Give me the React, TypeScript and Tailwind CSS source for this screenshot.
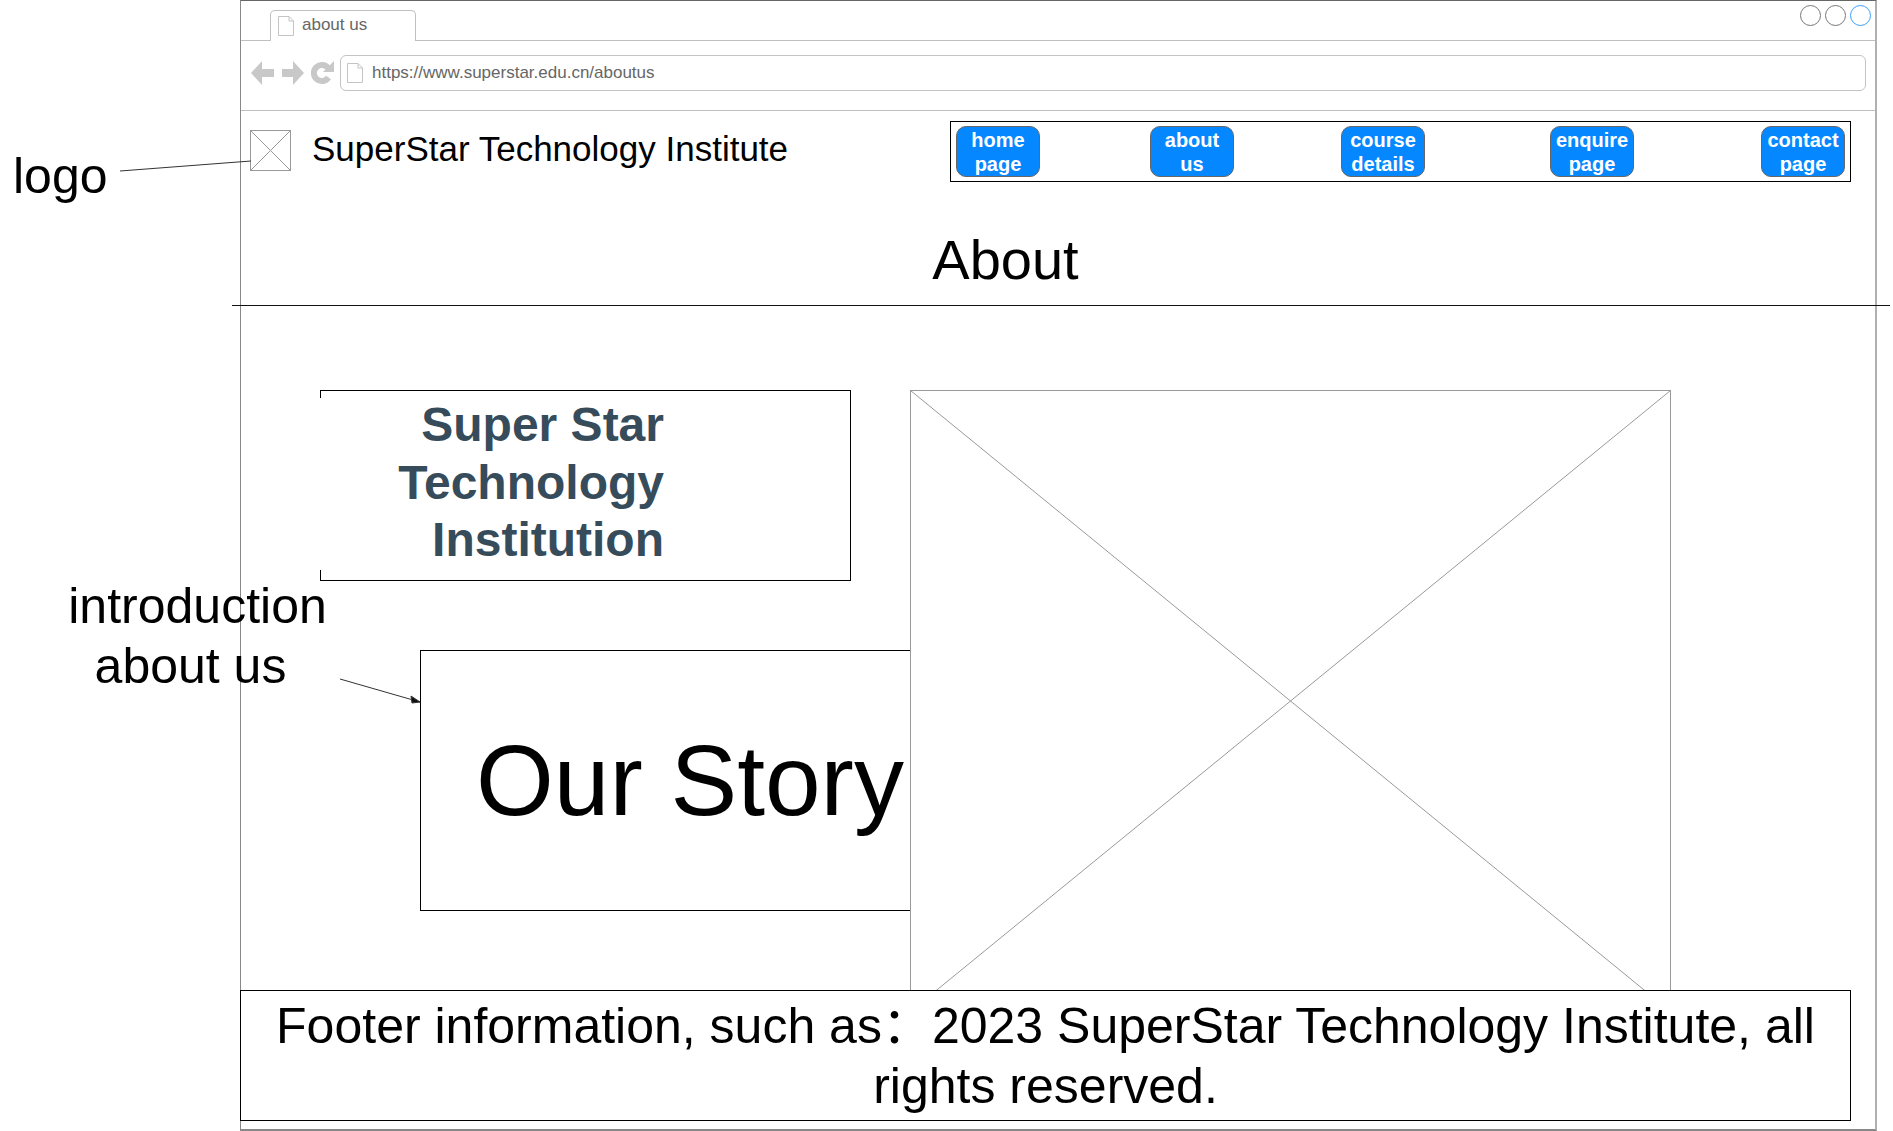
const FONT = "font-['Liberation_Sans',Arial,sans-serif]";

function DocIcon({ className }: { className: string }) {
  return (
    <svg className={className} viewBox="0 0 16 20" fill="none" stroke="#c4c4c4" strokeWidth="1">
      <path d="M0.5 0.5H11L15.5 5V19.5H0.5Z" />
      <path d="M11 0.5V5H15.5" />
    </svg>
  );
}

function NavButton({ top, bottom, className }: { top: string; bottom: string; className: string }) {
  return (
    <div className={`h-[51px] w-[84px] shrink-0 rounded-[10px] border border-[#666] bg-[#0588ff] pt-px text-center text-[20px] font-bold leading-[24px] text-white ${className}`}>
      <div>{top}</div>
      <div>{bottom}</div>
    </div>
  );
}

export default function App() {
  return (
    <div className={`relative h-[1131px] w-[1893px] overflow-hidden bg-white text-black ${FONT}`}>
      <div className="ml-[240px] flex h-[1131px] w-[1637px] flex-col border-x border-t border-b-2 border-x-[#888] border-t-[#666] border-b-[#888] border-r-2 border-r-[#b0b0b0]">
        {/* tab strip */}
        <div className="relative flex h-[40px] shrink-0 items-end border-b border-[#c0c0c0] pl-[29px]">
          <div className="-mb-px flex h-[31px] w-[146px] items-center gap-[9px] rounded-t-[5px] border border-b-0 border-[#c0c0c0] bg-white pl-[7px] text-[17px] leading-none text-[#666]">
            <DocIcon className="h-[20px] w-[16px]" />
            <span className="-ml-px mb-[3px]">about us</span>
          </div>
          <div className="ml-auto mr-[4px] flex gap-[4px] self-start pt-[4px]">
            <div className="h-[21px] w-[21px] rounded-full border border-[#777]" />
            <div className="h-[21px] w-[21px] rounded-full border border-[#777]" />
            <div className="h-[21px] w-[21px] rounded-full border border-[#3b9eff]" />
          </div>
        </div>
        {/* address bar */}
        <div className="flex h-[70px] shrink-0 items-center border-b border-[#c0c0c0] pb-[5px] pl-[10px] pr-[9px]">
          <svg className="h-[26px] w-[89px] shrink-0" viewBox="0 0 89 26" fill="#c8c8c8">
            <path d="M0 13L11 1V9H23V17H11V25Z" />
            <path d="M53 13L42 1V9H31V17H42V25Z" />
            <path d="M77.500 8.500A8 8 0 1 0 77.500 17.500" fill="none" stroke="#c8c8c8" strokeWidth="6" />
            <path d="M83 1V12H72Z" />
          </svg>
          <div className="flex h-[36px] flex-1 items-center gap-[9px] rounded-[6px] border border-[#c4c4c4] pl-[6px] text-[17px] leading-none text-[#666]">
            <DocIcon className="h-[20px] w-[16px]" />
            <span className="mb-[2px]">https://www.superstar.edu.cn/aboutus</span>
          </div>
        </div>
        {/* site header */}
        <div className="flex h-[71px] shrink-0 items-start pl-[9px]">
          <svg className="mt-[19px] h-[41px] w-[41px] shrink-0" viewBox="0 0 41 41" fill="none" stroke="#999" strokeWidth="1">
            <rect x="0.5" y="0.500" width="40" height="40" />
            <path d="M0.5 0.5L40.5 40.5M40.5 0.5L0.500 40.5" />
          </svg>
          <div className="ml-[21px] mt-[16px] text-[35px] leading-[44px]">SuperStar Technology Institute</div>
          <div className="ml-auto mr-[24px] mt-[10px] flex h-[61px] w-[901px] items-center border border-black pl-[5px]">
            <NavButton top="home" bottom="page" className="" />
            <NavButton top="about" bottom="us" className="ml-[110px]" />
            <NavButton top="course" bottom="details" className="ml-[107px]" />
            <NavButton top="enquire" bottom="page" className="ml-[125px]" />
            <NavButton top="contact" bottom="page" className="ml-[127px]" />
          </div>
        </div>
        {/* page heading */}
        <div className="h-[123px] shrink-0 pr-[105px] pt-[46px] text-center text-[56px] leading-[64px]">About</div>
        <div className="ml-[-9px] mr-[-15px] h-px shrink-0 bg-[#111]" />
        {/* main */}
        <div className="flex h-[684px] shrink-0 overflow-hidden pt-[84px]">
          <div className="ml-[79px] w-[590px] shrink-0">
            <div className="relative flex h-[191px] w-[531px] flex-col border border-l-0 border-black pr-[186px] pt-[5px] text-right text-[48px] font-bold leading-[57.5px] text-[#374c5b]">
              <span>Super Star</span>
              <span>Technology</span>
              <span>Institution</span>
              <div className="absolute left-0 top-0 h-[7px] w-px bg-black" />
              <div className="absolute bottom-0 left-0 h-[10px] w-px bg-black" />
            </div>
            <div className="ml-[100px] mt-[69px] flex h-[261px] w-[491px] items-center border-y border-l border-black pb-[2px] pl-[55px] text-[100px] leading-none">
              Our Story
            </div>
          </div>
          <svg className="h-[622px] w-[761px] shrink-0" viewBox="0 0 761 622" fill="none" stroke="#999" strokeWidth="1">
            <rect x="0.5" y="0.500" width="760" height="621" fill="white" />
            <path d="M0.5 0.5L760.500 621.500M760.500 0.5L0.500 621.500" />
          </svg>
        </div>
        {/* footer */}
        <div className="-ml-px h-[131px] w-[1611px] shrink-0 border border-black px-[20px] pt-[5px] text-center text-[50px] leading-[60px]">
          Footer information, such as<span className="font-['Noto_Sans_CJK_SC',sans-serif] leading-none">：</span>2023 SuperStar Technology Institute, all rights reserved.
        </div>
      </div>

      {/* annotations */}
      <div className="absolute left-[13px] top-[146px] text-[50px] leading-[60px]">logo</div>
      <div className="absolute left-[60px] top-[576px] w-[275px] text-center text-[50px] leading-[60px]">
        <div>introduction</div>
        <div className="-ml-[14px]">about us</div>
      </div>
      <svg className="absolute left-0 top-0 h-[1131px] w-[1893px]" viewBox="0 0 1893 1131" fill="none" stroke="#333" strokeWidth="1">
        <path d="M120 171L251 161" />
        <path d="M340 679L420 702" />
        <path d="M420 702L411 696L412 703Z" fill="#111" />
      </svg>
    </div>
  );
}
